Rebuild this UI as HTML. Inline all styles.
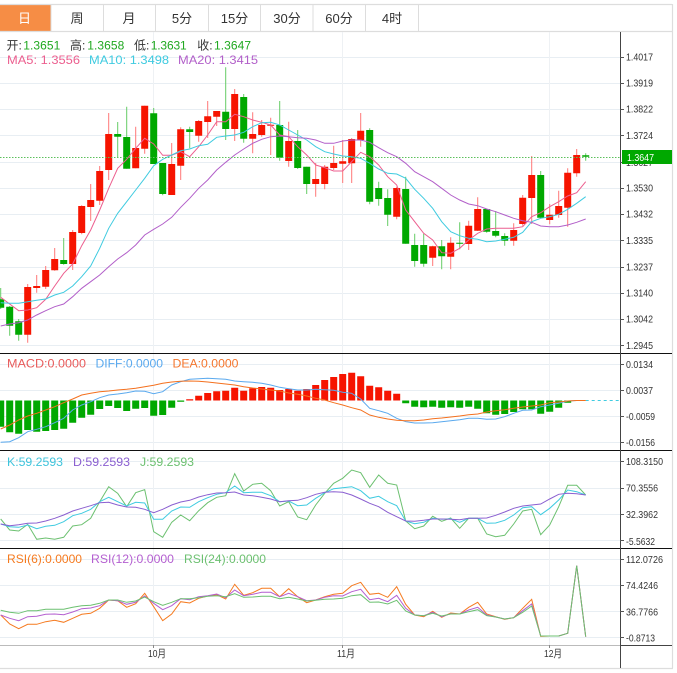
<!DOCTYPE html>
<html><head><meta charset="utf-8"><style>
html,body{margin:0;padding:0;background:#fff;width:677px;height:673px;overflow:hidden}
svg{display:block;filter:blur(.3px)}
text{font-family:"Liberation Sans","Noto Sans CJK SC",sans-serif}
.t{font-size:13px;fill:#333;text-anchor:middle}
.a{font-size:10.5px;fill:#333}
.l{font-size:12px}
polyline{fill:none;stroke-width:1}
</style></head><body>
<svg width="677" height="673" viewBox="0 0 677 673" xmlns="http://www.w3.org/2000/svg">
<rect x="0" y="5" width="51" height="26" fill="#f68d45"/>
<path d="M0 4.5H672M0 31.5H672M672.5 4V668M0 668.5H673" stroke="#ddd" stroke-width="1.2" fill="none"/>
<path d="M51 5V31M103.5 5V31M155.5 5V31M208.5 5V31M260.5 5V31M313 5V31M365.5 5V31M418.5 5V31" stroke="#ddd" stroke-width="1"/>
<text class="t" x="24.5" y="23" style="fill:#fff">日</text>
<text class="t" x="77" y="23">周</text>
<text class="t" x="129" y="23">月</text>
<text class="t" x="182" y="23">5分</text>
<text class="t" x="234.5" y="23">15分</text>
<text class="t" x="287" y="23">30分</text>
<text class="t" x="339" y="23">60分</text>
<text class="t" x="392" y="23">4时</text>

<path d="M0 57.5H620M0 83.5H620M0 109.5H620M0 135.5H620M0 162.5H620M0 188.5H620M0 214.5H620M0 240.5H620M0 267.5H620M0 293.5H620M0 319.5H620M0 345.5H620M0 364.5H620M0 390.5H620M0 416.5H620M0 442.5H620M0 461.5H620M0 488.5H620M0 514.5H620M0 540.5H620M0 559.5H620M0 585.5H620M0 611.5H620M0 637.5H620" stroke="#e8eef3" stroke-width="1"/>
<path d="M153.5 32V645M342.5 32V645M549.5 32V645" stroke="#eef1f4" stroke-width="1"/>

<!-- wicks -->
<path stroke="#f77" stroke-width="1" fill="none" d="M27.7 284V342.7M36.7 275V292.7M45.7 266V289M54.7 248V270.7M72.7 230V270M81.7 205.3V234.3M90.7 184V221M99.7 166V205M108.7 113V180M135.7 126.7V168.3M144.7 105.7V153.7M171.7 143V195M180.7 127.3V180M198.7 120V141.7M207.7 101V138M216.7 111V126M234.7 89V141M252.7 112.3V153.3M261.7 120V136.7M270.7 117.7V155M288.7 121.7V166.7M315.7 163V196.7M324.7 165V189.3M333.7 145.7V170M342.7 140V183M351.7 138V183M360.7 113V146.7M396.7 186.7V219.3M432.7 245.7V266M450.7 237.3V269.3M468.7 220.7V250M477.7 197.3V231M513.7 223.3V245.7M522.7 195V225.7M531.7 156V224M549.7 204V224.3M558.7 190.7V217.7M567.7 168.3V226.7M576.7 149V176.7"/>
<path stroke="#6c6" stroke-width="1" fill="none" d="M.7 288V309M9.7 306V335.7M18.7 319V340.7M63.7 238V264.7M117.7 122V158M126.7 106.7V168.7M153.7 108V164M162.7 163V195.3M189.7 126.7V148.3M225.7 67.3V140M243.7 94V142.7M279.7 101V160.7M297.7 130V169M306.7 166.7V194M369.7 128.3V204.3M378.7 181.7V205.7M387.7 189.3V226M405.7 176.7V243.7M414.7 233.7V266.7M423.7 233.7V266.7M441.7 240V269.3M459.7 222.3V249.3M486.7 209V232.7M495.7 211V237.3M504.7 233.3V245.7M540.7 171V218M585.7 153.3V160.7"/>
<!-- bodies -->
<path stroke="#f61400" stroke-width="7" fill="none" d="M27.7 287V334.7M36.7 286V288M45.7 270V286.7M54.7 259V270.3M72.7 232V264M81.7 206V233M90.7 200V207M99.7 171V200.7M108.7 134V170M135.7 148V168.3M144.7 105.7V148.7M171.7 164V195M180.7 129.3V165.7M198.7 121V135.7M207.7 116.3V122M216.7 111V116.7M234.7 94V129M252.7 134V138.7M261.7 125V135M270.7 124.7V125.7M288.7 141V161M315.7 179V184M324.7 166.7V184M333.7 163V168M342.7 161.3V163.7M351.7 139V163.3M360.7 130.7V140M396.7 188V216.7M432.7 246.3V257.7M450.7 242.7V256.7M468.7 225.7V244M477.7 209V230.7M513.7 230V240.7M522.7 197.7V224M531.7 175V198M549.7 214.7V220M558.7 206V215M567.7 172.7V207.7M576.7 155V173.3"/>
<path stroke="#00a800" stroke-width="7" fill="none" d="M.7 299.3V307.7M9.7 306.7V325.7M18.7 321.3V334.7M63.7 260V264M117.7 134V136.7M126.7 137V168.7M153.7 113.3V164M162.7 163V194M189.7 129.3V132M225.7 111.7V129M243.7 97V138.7M279.7 125V157.7M297.7 141V168M306.7 166.7V184M369.7 130V201.7M378.7 188V199M387.7 198V214.7M405.7 189V243.7M414.7 245V261M423.7 245V263.7M441.7 246.3V256.3M459.7 242.7V243.7M486.7 209V231.7M495.7 231V235.7M504.7 236V240.7M540.7 175V217.7M585.7 155.3V156.7"/>

<polyline stroke="#ec5f8f" points=".7 297.3 9.7 304 18.7 310.7 27.7 310 36.7 307.7 45.7 299.3 54.7 286 63.7 273.3 72.7 264 81.7 245.7 90.7 230 99.7 210 108.7 188.3 117.7 168.3 126.7 159.3 135.7 148.3 144.7 138.3 153.7 144 162.7 155.3 171.7 155.3 180.7 151.7 189.7 156.7 198.7 146.7 207.7 135 216.7 121.7 225.7 121.7 234.7 114.3 243.7 116.7 252.7 120 261.7 122.3 270.7 125 279.7 135 288.7 136.7 297.7 146.7 306.7 155 315.7 165 324.7 167.7 333.7 171 342.7 171 351.7 161.7 360.7 152.3 369.7 156.7 378.7 165 387.7 176.7 396.7 185 405.7 210 414.7 221.7 423.7 233.3 432.7 240 441.7 252.7 450.7 253.3 459.7 248.3 468.7 240 477.7 233.3 486.7 229 495.7 228.3 504.7 228.3 513.7 228.3 522.7 226.7 531.7 216.7 540.7 212.7 549.7 206.7 558.7 201.7 567.7 196 576.7 192.7 585.7 181.7"/>
<polyline stroke="#3fcbe0" points=".7 302.7 9.7 303.3 18.7 303.3 27.7 301.7 36.7 300.3 45.7 299 54.7 295 63.7 292.3 72.7 286 81.7 276.7 90.7 266 99.7 248.3 108.7 228.3 117.7 213.3 126.7 201.7 135.7 190 144.7 178.3 153.7 165.7 162.7 159.3 171.7 155 180.7 150.7 189.7 149 198.7 145.7 207.7 144.3 216.7 137.3 225.7 136 234.7 135 243.7 132.3 252.7 126.7 261.7 122.7 270.7 122.3 279.7 125 288.7 130 297.7 135 306.7 140 315.7 146.7 324.7 151.7 333.7 154 342.7 156 351.7 156.7 360.7 158.3 369.7 163.3 378.7 169 387.7 173.3 396.7 174 405.7 178.3 414.7 189.3 423.7 198.3 432.7 208.3 441.7 221.7 450.7 231.7 459.7 235.7 468.7 238.3 477.7 239.3 486.7 241.7 495.7 241 504.7 239.3 513.7 237.3 522.7 232.3 531.7 221.7 540.7 218.3 549.7 216.7 558.7 214.3 567.7 209.3 576.7 203.3 585.7 196.7"/>
<polyline stroke="#b25fc9" points=".7 326 9.7 324 18.7 322.7 27.7 320 36.7 315 45.7 310.7 54.7 306.7 63.7 304 72.7 296.7 81.7 288.3 90.7 281.7 99.7 275 108.7 266.7 117.7 259 126.7 252.7 135.7 245 144.7 235 153.7 229.3 162.7 224 171.7 217.3 180.7 207.3 189.7 198.3 198.7 188.3 207.7 180 216.7 170 225.7 162.3 234.7 155 243.7 149 252.7 143.3 261.7 139.3 270.7 136.7 279.7 136 288.7 136.7 297.7 137.7 306.7 138.3 315.7 140 324.7 143.3 333.7 143.3 342.7 141 351.7 140 360.7 140 369.7 142.3 378.7 147.7 387.7 152.7 396.7 156.7 405.7 163.3 414.7 171.7 423.7 176.7 432.7 181.7 441.7 188.3 450.7 195 459.7 200 468.7 204 477.7 205.7 486.7 209 495.7 211.7 504.7 215 513.7 218.3 522.7 220.7 531.7 222.3 540.7 226 549.7 226.7 558.7 226.7 567.7 225 576.7 222.3 585.7 219"/>

<path d="M0 157.5H620" stroke="#5cc05c" stroke-width="1" stroke-dasharray="1.5 1.5"/>

<!-- MACD -->
<path stroke="#00a800" stroke-width="7" fill="none" d="M.7 400.5V426.7M9.7 400.5V432.3M18.7 400.5V433.7M27.7 400.5V430M36.7 400.5V431.7M45.7 400.5V431M54.7 400.5V430M63.7 400.5V428.7M72.7 400.5V422.7M81.7 400.5V417.7M90.7 400.5V414.7M99.7 400.5V409M108.7 400.5V406M117.7 400.5V408M126.7 400.5V411M135.7 400.5V408.7M144.7 400.5V408M153.7 400.5V415.7M162.7 400.5V415M171.7 400.5V407.7M180.7 400.5V401.7M405.7 400.5V403.3M414.7 400.5V406.7M423.7 400.5V407.3M432.7 400.5V406.7M441.7 400.5V407.7M450.7 400.5V407.3M459.7 400.5V407.7M468.7 400.5V406.7M477.7 400.5V408.7M486.7 400.5V413.3M495.7 400.5V414.7M504.7 400.5V414M513.7 400.5V412M522.7 400.5V409.3M531.7 400.5V409.3M540.7 400.5V413.7M549.7 400.5V411.7M558.7 400.5V407.7M567.7 400.5V402.7M576.7 400.5V401"/>
<path stroke="#f61400" stroke-width="7" fill="none" d="M189.7 400.5V399.3M198.7 400.5V395.7M207.7 400.5V393M216.7 400.5V391.3M225.7 400.5V390.7M234.7 400.5V387.7M243.7 400.5V390.7M252.7 400.5V388.3M261.7 400.5V387M270.7 400.5V387.7M279.7 400.5V390M288.7 400.5V389M297.7 400.5V390.7M306.7 400.5V389M315.7 400.5V385M324.7 400.5V380M333.7 400.5V377M342.7 400.5V374M351.7 400.5V372.7M360.7 400.5V376.3M369.7 400.5V385.7M378.7 400.5V387.3M387.7 400.5V390.7M396.7 400.5V393.7"/>
<path d="M585.7 400.5H619" stroke="#3fcbe0" stroke-width="1" stroke-dasharray="3 3"/>
<polyline stroke="#5aa9ee" points=".7 442.3 9.7 441.7 18.7 437.7 27.7 431.7 36.7 429.3 45.7 426.7 54.7 422.7 63.7 418.3 72.7 410 81.7 405 90.7 401.7 99.7 397.7 108.7 395 117.7 394 126.7 392.7 135.7 391 144.7 391.3 153.7 393.7 162.7 391.7 171.7 385 180.7 381.7 189.7 379.3 198.7 378.7 207.7 378.3 216.7 378.7 225.7 379.3 234.7 381 243.7 381.7 252.7 382.3 261.7 383.3 270.7 385 279.7 387.3 288.7 388.7 297.7 390 306.7 390 315.7 389.3 324.7 389.7 333.7 390.3 342.7 392.3 351.7 393.3 360.7 399 369.7 408.3 378.7 410.7 387.7 413.3 396.7 418.3 405.7 421.7 414.7 423 423.7 423 432.7 422.7 441.7 421.7 450.7 420.7 459.7 419.7 468.7 418.3 477.7 418.3 486.7 419.3 495.7 419 504.7 416.7 513.7 413.3 522.7 410.3 531.7 410 540.7 406.7 549.7 405 558.7 403.3 567.7 401 576.7 400.5 585.7 400.5"/>
<polyline stroke="#f4701e" points=".7 429 9.7 425 18.7 420 27.7 416 36.7 413.3 45.7 410 54.7 406.7 63.7 402.7 72.7 399 81.7 395 90.7 393.3 99.7 391.7 108.7 391 117.7 390 126.7 389.3 135.7 388.3 144.7 386.7 153.7 385.3 162.7 383.3 171.7 382 180.7 381.3 189.7 381 198.7 381.3 207.7 382 216.7 383 225.7 384 234.7 385 243.7 386.7 252.7 388 261.7 389 270.7 390 279.7 391 288.7 393 297.7 394.3 306.7 396 315.7 398.3 324.7 400 333.7 402.7 342.7 405 351.7 407.7 360.7 410 369.7 415 378.7 417.3 387.7 419 396.7 420.3 405.7 420.7 414.7 420.7 423.7 420 432.7 418.7 441.7 418 450.7 417 459.7 416 468.7 414.7 477.7 414 486.7 412 495.7 410.7 504.7 409.7 513.7 408.3 522.7 407 531.7 406 540.7 405 549.7 402.7 558.7 402 567.7 401 576.7 400.5 585.7 400.5"/>

<!-- KDJ -->
<polyline stroke="#6cc070" points=".7 519 9.7 530 18.7 531 27.7 524.3 36.7 539.3 45.7 538 54.7 539.3 63.7 537.3 72.7 526 81.7 524.7 90.7 518.3 99.7 501.7 108.7 486.7 117.7 493.3 126.7 506.7 135.7 492.7 144.7 489.7 153.7 531.7 162.7 537.3 171.7 522.3 180.7 515 189.7 520.7 198.7 510.7 207.7 502.7 216.7 497.3 225.7 495.7 234.7 473.7 243.7 491 252.7 484.3 261.7 483.3 270.7 490.7 279.7 506 288.7 501.7 297.7 517 306.7 519.7 315.7 505 324.7 493.3 333.7 483.3 342.7 478.3 351.7 470 360.7 472.7 369.7 487.3 378.7 475 387.7 483.3 396.7 485 405.7 521 414.7 528.7 423.7 526 432.7 516.3 441.7 521.3 450.7 518 459.7 528.3 468.7 518.3 477.7 518.3 486.7 534 495.7 536.7 504.7 535.3 513.7 524 522.7 511 531.7 509.3 540.7 534.7 549.7 525 558.7 506.7 567.7 485.3 576.7 485.3 585.7 495"/>
<polyline stroke="#3fcbe0" points=".7 524 9.7 526.7 18.7 527.3 27.7 525 36.7 528.7 45.7 526.3 54.7 525.3 63.7 521.7 72.7 515.7 81.7 513.3 90.7 509.3 99.7 501.7 108.7 497.3 117.7 501.7 126.7 506 135.7 502.3 144.7 503 153.7 519.3 162.7 519.3 171.7 511 180.7 507 189.7 507.3 198.7 501.7 207.7 497.7 216.7 494.3 225.7 492.7 234.7 486 243.7 492.7 252.7 492.3 261.7 492.3 270.7 495.7 279.7 501.7 288.7 501 297.7 505.7 306.7 505 315.7 498.3 324.7 492.7 333.7 488.7 342.7 487.7 351.7 486.7 360.7 490.7 369.7 498.3 378.7 496.3 387.7 501.7 396.7 505.7 405.7 521 414.7 523.7 423.7 522.3 432.7 518.3 441.7 519.3 450.7 518.7 459.7 522.3 468.7 518.3 477.7 518.3 486.7 523.3 495.7 523 504.7 520.3 513.7 515 522.7 507.7 531.7 506.7 540.7 514.7 549.7 508.3 558.7 500 567.7 490 576.7 491.7 585.7 495"/>
<polyline stroke="#8a5fd0" points=".7 524 9.7 525.7 18.7 524.7 27.7 523.3 36.7 523 45.7 521 54.7 518.3 63.7 515 72.7 511 81.7 508.3 90.7 505.7 99.7 502.7 108.7 502.3 117.7 505 126.7 507 135.7 507.3 144.7 509.3 153.7 512.7 162.7 509.3 171.7 505 180.7 502 189.7 500.3 198.7 497 207.7 494.7 216.7 493 225.7 492.7 234.7 492 243.7 495 252.7 495.7 261.7 497.3 270.7 499 279.7 501.7 288.7 500.7 297.7 500.3 306.7 497.7 315.7 494.3 324.7 492.3 333.7 491.7 342.7 492.3 351.7 495 360.7 499 369.7 503.3 378.7 506.7 387.7 512.3 396.7 516.7 405.7 521 414.7 521.3 423.7 520.3 432.7 519 441.7 519 450.7 519.3 459.7 519.7 468.7 518.3 477.7 518.3 486.7 518 495.7 515.3 504.7 512 513.7 508.3 522.7 506 531.7 505 540.7 504 549.7 499 558.7 494.3 567.7 493.3 576.7 493.7 585.7 495"/>

<!-- RSI -->
<polyline stroke="#f57a1f" points=".7 615 9.7 624 18.7 628.7 27.7 624.3 36.7 624.3 45.7 621.7 54.7 620.3 63.7 622.3 72.7 618.3 81.7 614.3 90.7 613.3 99.7 608.3 108.7 600 117.7 600.7 126.7 607.3 135.7 603.7 144.7 593.3 153.7 606.7 162.7 620.7 171.7 614 180.7 601.7 189.7 603 198.7 598.3 207.7 596 216.7 594.7 225.7 599 234.7 584.3 243.7 595.3 252.7 592.7 261.7 588.3 270.7 588.3 279.7 596.7 288.7 588.7 297.7 596.7 306.7 602.7 315.7 600 324.7 596.7 333.7 594.3 342.7 593.3 351.7 585.7 360.7 582.3 369.7 594.3 378.7 593.3 387.7 597.3 396.7 586.7 405.7 604.3 414.7 615 423.7 616.7 432.7 611.3 441.7 617.3 450.7 613 459.7 614 468.7 607.3 477.7 602.3 486.7 614 495.7 616.7 504.7 619.3 513.7 617.7 522.7 608.3 531.7 599.3 540.7 636.3 549.7 636 558.7 636 567.7 633.3 576.7 565.7 585.7 636.7"/>
<polyline stroke="#b45fd0" points=".7 615 9.7 618.3 18.7 620.7 27.7 616.7 36.7 616.3 45.7 614.3 54.7 614 63.7 614.7 72.7 612 81.7 608.7 90.7 608 99.7 605.7 108.7 600 117.7 600.7 126.7 604.3 135.7 602.3 144.7 596 153.7 603.3 162.7 609.7 171.7 605.7 180.7 598.7 189.7 599.7 198.7 596.7 207.7 595.7 216.7 594 225.7 597.7 234.7 590 243.7 595.7 252.7 594.3 261.7 592.3 270.7 592.3 279.7 596.7 288.7 593.3 297.7 596.7 306.7 600.7 315.7 600 324.7 597.3 333.7 595.7 342.7 596 351.7 591.7 360.7 589.3 369.7 599.7 378.7 598.3 387.7 601.7 396.7 595.3 405.7 608.3 414.7 615 423.7 615.7 432.7 612.3 441.7 616.7 450.7 613.7 459.7 614 468.7 610 477.7 607.3 486.7 615 495.7 617 504.7 619 513.7 617.7 522.7 610.7 531.7 604 540.7 636 549.7 636 558.7 636 567.7 633.3 576.7 565.7 585.7 636.7"/>
<polyline stroke="#6cc070" points=".7 610.3 9.7 612.3 18.7 613.3 27.7 610.7 36.7 610.7 45.7 609.3 54.7 609.3 63.7 609.3 72.7 607.3 81.7 605.7 90.7 605.3 99.7 603.3 108.7 600 117.7 600 126.7 602.3 135.7 601 144.7 597 153.7 601.7 162.7 605.3 171.7 602.3 180.7 598.7 189.7 598.7 198.7 597.7 207.7 596.3 216.7 595.7 225.7 596.7 234.7 593.7 243.7 597.3 252.7 597 261.7 596.3 270.7 596.3 279.7 598.7 288.7 597.3 297.7 599 306.7 601 315.7 600.3 324.7 599.3 333.7 599 342.7 598.3 351.7 595.7 360.7 594.7 369.7 602.3 378.7 602 387.7 604 396.7 600.3 405.7 611 414.7 615 423.7 615.7 432.7 613.3 441.7 616 450.7 614 459.7 614 468.7 611.7 477.7 609.7 486.7 615.7 495.7 617 504.7 619 513.7 617.7 522.7 612.3 531.7 606 540.7 636 549.7 636 558.7 636 567.7 633.3 576.7 565.7 585.7 636.7"/>

<!-- frame lines -->
<path d="M0 353.5H672M0 450.5H672M0 548.5H672" stroke="#111" stroke-width="1"/>
<path d="M0 645.5H620" stroke="#bbb" stroke-width="1"/>
<path d="M620 645.5H672" stroke="#444" stroke-width="1"/>
<path d="M620.5 32V668" stroke="#444" stroke-width="1"/>
<path d="M620 57.5h4M620 83.5h4M620 109.5h4M620 135.5h4M620 162.5h4M620 188.5h4M620 214.5h4M620 240.5h4M620 267.5h4M620 293.5h4M620 319.5h4M620 345.5h4M620 364.5h4M620 390.5h4M620 416.5h4M620 442.5h4M620 461.5h4M620 488.5h4M620 514.5h4M620 540.5h4M620 559.5h4M620 585.5h4M620 611.5h4M620 637.5h4" stroke="#555" stroke-width="1"/>

<!-- axis labels -->
<g class="a">
<text class="a" x="626" y="60.5" textLength="27" lengthAdjust="spacingAndGlyphs">1.4017</text>
<text class="a" x="626" y="86.5" textLength="27" lengthAdjust="spacingAndGlyphs">1.3919</text>
<text class="a" x="626" y="112.5" textLength="27" lengthAdjust="spacingAndGlyphs">1.3822</text>
<text class="a" x="626" y="139" textLength="27" lengthAdjust="spacingAndGlyphs">1.3724</text>
<text class="a" x="626" y="166" textLength="27" lengthAdjust="spacingAndGlyphs">1.3627</text>
<text class="a" x="626" y="191.5" textLength="27" lengthAdjust="spacingAndGlyphs">1.3530</text>
<text class="a" x="626" y="217.5" textLength="27" lengthAdjust="spacingAndGlyphs">1.3432</text>
<text class="a" x="626" y="244" textLength="27" lengthAdjust="spacingAndGlyphs">1.3335</text>
<text class="a" x="626" y="270.5" textLength="27" lengthAdjust="spacingAndGlyphs">1.3237</text>
<text class="a" x="626" y="296.5" textLength="27" lengthAdjust="spacingAndGlyphs">1.3140</text>
<text class="a" x="626" y="322.5" textLength="27" lengthAdjust="spacingAndGlyphs">1.3042</text>
<text class="a" x="626" y="349" textLength="27" lengthAdjust="spacingAndGlyphs">1.2945</text>
<text class="a" x="626" y="368" textLength="27" lengthAdjust="spacingAndGlyphs">0.0134</text>
<text class="a" x="626" y="394" textLength="27" lengthAdjust="spacingAndGlyphs">0.0037</text>
<text class="a" x="626" y="420" textLength="29" lengthAdjust="spacingAndGlyphs">-0.0059</text>
<text class="a" x="626" y="446" textLength="29" lengthAdjust="spacingAndGlyphs">-0.0156</text>
<text class="a" x="626" y="465" textLength="37" lengthAdjust="spacingAndGlyphs">108.3150</text>
<text class="a" x="626" y="491.5" textLength="32" lengthAdjust="spacingAndGlyphs">70.3556</text>
<text class="a" x="626" y="518" textLength="32" lengthAdjust="spacingAndGlyphs">32.3962</text>
<text class="a" x="626" y="545" textLength="29" lengthAdjust="spacingAndGlyphs">-5.5632</text>
<text class="a" x="626" y="563" textLength="37" lengthAdjust="spacingAndGlyphs">112.0726</text>
<text class="a" x="626" y="589" textLength="32" lengthAdjust="spacingAndGlyphs">74.4246</text>
<text class="a" x="626" y="615.5" textLength="32" lengthAdjust="spacingAndGlyphs">36.7766</text>
<text class="a" x="626" y="641.5" textLength="29" lengthAdjust="spacingAndGlyphs">-0.8713</text>
</g>
<rect x="622" y="150" width="50" height="14" fill="#00a800"/>
<text x="627" y="161" font-size="10.5" fill="#fff" textLength="27" lengthAdjust="spacingAndGlyphs">1.3647</text>

<!-- x labels -->
<path d="M153.5 645v3M342.5 645v3M549.5 645v3" stroke="#888" stroke-width="1"/>
<text class="a" x="148" y="657" textLength="18" lengthAdjust="spacingAndGlyphs">10月</text>
<text class="a" x="337" y="657" textLength="18" lengthAdjust="spacingAndGlyphs">11月</text>
<text class="a" x="544" y="657" textLength="18" lengthAdjust="spacingAndGlyphs">12月</text>

<!-- legends -->
<g class="l">
<text class="l" x="6.5" y="49.5" fill="#333">开:</text><text class="l" x="23.3" y="49.5" fill="#1fa81f" textLength="37">1.3651</text>
<text class="l" x="70" y="49.5" fill="#333">高:</text><text class="l" x="87.3" y="49.5" fill="#1fa81f" textLength="37">1.3658</text>
<text class="l" x="134" y="49.5" fill="#333">低:</text><text class="l" x="150.7" y="49.5" fill="#1fa81f" textLength="36">1.3631</text>
<text class="l" x="197.3" y="49.5" fill="#333">收:</text><text class="l" x="214" y="49.5" fill="#1fa81f" textLength="37">1.3647</text>
<text class="l" x="7" y="64" fill="#ec5f8f" textLength="73" lengthAdjust="spacingAndGlyphs">MA5: 1.3556</text>
<text class="l" x="89" y="64" fill="#3fcbe0" textLength="80" lengthAdjust="spacingAndGlyphs">MA10: 1.3498</text>
<text class="l" x="178" y="64" fill="#b25fc9" textLength="80" lengthAdjust="spacingAndGlyphs">MA20: 1.3415</text>
<text class="l" x="7" y="367.5" fill="#e85b5b" textLength="79" lengthAdjust="spacingAndGlyphs">MACD:0.0000</text>
<text class="l" x="95.5" y="367.5" fill="#5aa9ee" textLength="67.5" lengthAdjust="spacingAndGlyphs">DIFF:0.0000</text>
<text class="l" x="172.5" y="367.5" fill="#f4762e" textLength="66" lengthAdjust="spacingAndGlyphs">DEA:0.0000</text>
<text class="l" x="7" y="466" fill="#3fc4dc" textLength="56" lengthAdjust="spacingAndGlyphs">K:59.2593</text>
<text class="l" x="73" y="466" fill="#8a5fd0" textLength="57" lengthAdjust="spacingAndGlyphs">D:59.2593</text>
<text class="l" x="140" y="466" fill="#6cc070" textLength="54" lengthAdjust="spacingAndGlyphs">J:59.2593</text>
<text class="l" x="7" y="563" fill="#f57a1f" textLength="75" lengthAdjust="spacingAndGlyphs">RSI(6):0.0000</text>
<text class="l" x="91" y="563" fill="#b45fd0" textLength="83" lengthAdjust="spacingAndGlyphs">RSI(12):0.0000</text>
<text class="l" x="184" y="563" fill="#6cc070" textLength="82" lengthAdjust="spacingAndGlyphs">RSI(24):0.0000</text>
</g>
</svg>
</body></html>
